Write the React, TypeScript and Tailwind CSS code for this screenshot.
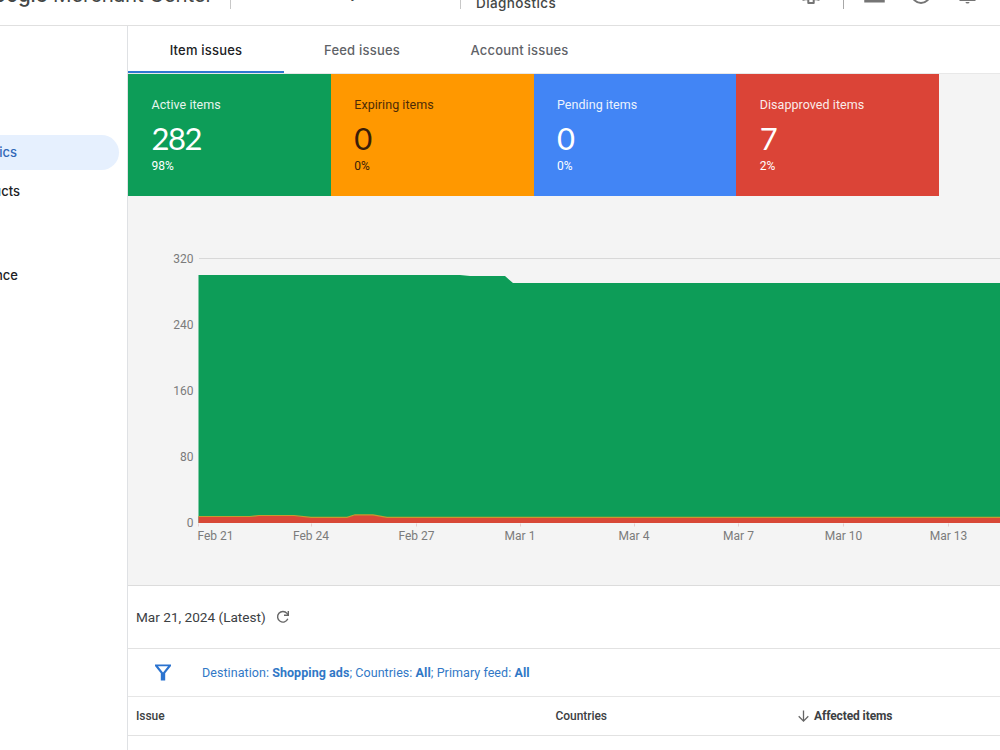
import React from 'react';

const tabs = [
  { label: 'Item issues', width: 'w-[156px]', active: true },
  { label: 'Feed issues', width: 'w-[156px]', active: false },
  { label: 'Account issues', width: 'w-[159px]', active: false },
];

const stats = [
  { label: 'Active items', value: '282', percent: '98%', style: 'bg-[#0d9d58] text-white' },
  { label: 'Expiring items', value: '0', percent: '0%', style: 'bg-[#ff9800] text-[#3a1d08]' },
  { label: 'Pending items', value: '0', percent: '0%', style: 'bg-[#4285f5] text-white' },
  { label: 'Disapproved items', value: '7', percent: '2%', style: 'bg-[#db4437] text-white' },
];

const yTicks = [
  { label: '320', y: 62 },
  { label: '240', y: 128 },
  { label: '160', y: 194 },
  { label: '80', y: 260 },
  { label: '0', y: 326 },
];

const xTicks = [
  { label: 'Feb 21', x: 87.5, tick: 70.5 },
  { label: 'Feb 24', x: 183, tick: 183.5 },
  { label: 'Feb 27', x: 288.5, tick: 288.5 },
  { label: 'Mar 1', x: 392, tick: 392.5 },
  { label: 'Mar 4', x: 506, tick: 506.5 },
  { label: 'Mar 7', x: 610.5, tick: 610.5 },
  { label: 'Mar 10', x: 715.5, tick: 715.5 },
  { label: 'Mar 13', x: 820.5, tick: 820.5 },
];

const Header: React.FC = () => {
  return (
    <header className="h-[26px] shrink-0 flex items-end overflow-hidden border-b border-[#e0e0e0] bg-white">
      <div className="h-16 w-full shrink-0 flex items-center text-[#444746]">
        <div className="w-[213px] flex justify-end whitespace-nowrap font-['Inter','Roboto',sans-serif] text-[20.5px] leading-7 pt-[4px] tracking-[-0.2px]">
          <span className="font-medium">Google</span>&nbsp;Merchant Center
        </div>
        <div className="w-px h-8 ml-[17px] mt-[-1px] bg-[#c8c8c8]" />
        <div className="w-[229px] pl-[26px] pb-px text-[14px] font-['Inter','Roboto',sans-serif]">Store Inventory</div>
        <div className="w-px h-8 mt-[-1px] bg-[#c8c8c8]" />
        <div className="w-[338px] pl-[15px] pt-px font-['Inter','Roboto',sans-serif] text-[13.5px] leading-[18px] tracking-[0.4px] font-medium">
          <div>Products</div>
          <div>Diagnostics</div>
        </div>
        {/* Toolbar icons */}
        <svg className="w-6 h-6 shrink-0" viewBox="0 0 24 24" fill="none" stroke="#757575" strokeWidth="2" strokeLinejoin="round">
          <circle cx="12" cy="12" r="3.500" />
          <path d="M10 2h4l.7 3 2 1.100 3-.9 2 3.500-2.300 2v2.600l2.300 2-2 3.500-3.200-.8-1.800 1V22h-5.400v-3l-1.800-1-3.200.8-2-3.500 2.300-2v-2.600l-2.300-2 2-3.500 3 .9 2-1.100z" />
        </svg>
        <div className="w-px h-8 ml-[20px] mt-[-1px] bg-[#a8a8a8]" />
        <svg className="w-6 h-6 ml-[18px] shrink-0" viewBox="0 0 24 24" fill="none" stroke="#757575" strokeWidth="2.500">
          <path d="M3.500 4h18v16.200H3.500z" />
        </svg>
        <svg className="w-6 h-6 ml-[23px] shrink-0" viewBox="0 0 24 24" fill="none" stroke="#757575" strokeWidth="2">
          <circle cx="12" cy="13" r="9" />
        </svg>
        <svg className="w-6 h-6 ml-[23px] shrink-0" viewBox="0 0 24 24" fill="#757575">
          <path d="M19.500 18v2h-16v-2l2-2v-5c0-3 1.600-5.600 4.500-6.300V4a1.500 1.500 0 0 1 3 0v.7c2.900.7 4.500 3.300 4.500 6.300v5z" />
          <path d="M9.500 21h4a2 1.500 0 0 1-4 0z" />
        </svg>
      </div>
    </header>
  );
};

const Sidebar: React.FC = () => {
  return (
    <aside className="w-[127px] shrink-0 pt-[109px] overflow-hidden font-['Inter','Roboto',sans-serif] text-[13px] font-medium text-[#202124]">
      <div className="w-[119px] h-[35px] flex items-center justify-end pr-[102px] rounded-r-full bg-[#e6f0fe] text-[#3168b8]">
        Diagnostics
      </div>
      <div className="w-[20px] h-[44px] flex items-center justify-end whitespace-nowrap">All products</div>
      <div className="w-[18px] h-[42px] mt-[41px] flex items-center justify-end">Performance</div>
    </aside>
  );
};

const Chart: React.FC = () => {
  return (
    <svg className="block w-[872px] h-[389px]" viewBox="0 0 872 389">
      <path d="M71 62.500H872" stroke="#d8d8d8" />
      <path d="M70.500 79H332L342 80H377L385 87H872V327H70.500z" fill="#0d9d58" />
      <path
        d="M70.500 320.800H122L131 319.800H166L183 321.500H219L227 319H245L259 321.500H872V327H70.500z"
        fill="#d84837"
      />
      <path
        d="M70.500 320.500H122L131 319.500H166L183 321.300H219L227 318.800H245L259 321.300H872"
        fill="none"
        stroke="#c9982e"
        strokeWidth="1.200"
      />
      <g fontFamily="Roboto, sans-serif" fontSize="12" fill="#7b7b7b">
        {yTicks.map((t) => (
          <text key={t.label} x="65.500" y={t.y + 4.500} textAnchor="end">
            {t.label}
          </text>
        ))}
        {xTicks.map((t) => (
          <g key={t.label}>
            <path d={`M${t.tick} 327.500v3`} stroke="#e5cfcf" />
            <text x={t.x} y="344" textAnchor="middle">
              {t.label}
            </text>
          </g>
        ))}
      </g>
    </svg>
  );
};

const App: React.FC = () => {
  return (
    <div className="w-[1000px] h-[750px] flex flex-col overflow-hidden bg-white font-['Roboto',sans-serif] text-[#3c4043]">
      <Header />
      <div className="flex flex-1 min-h-0">
        <Sidebar />
        <main className="flex-1 min-w-0 overflow-hidden border-l border-[#dfe1e4]">
          {/* Tabs */}
          <div className="h-[47px] flex font-['Inter','Roboto',sans-serif] text-[13px] tracking-[0.2px] font-medium">
            {tabs.map((tab) => (
              <div
                key={tab.label}
                className={`${tab.width} flex items-center justify-center pt-[4px] border-b-2 ${
                  tab.active ? 'border-[#2f78d0] text-[#202124]' : 'border-transparent text-[#5f6368]'
                }`}
              >
                {tab.label}
              </div>
            ))}
          </div>

          {/* Summary and history */}
          <section className="h-[513px] border-t border-b border-t-[#e8e8e8] border-b-[#dcdcdc] bg-[#f4f4f4]">
            <div className="flex w-[811px] h-[122px]">
              {stats.map((s) => (
                <div key={s.label} className={`flex-1 pl-[23.5px] pt-[22px] ${s.style}`}>
                  <div className="text-[12.5px] leading-[18px] tracking-[0.05px] opacity-90">{s.label}</div>
                  <div className="mt-[4px] h-[41px] font-['Lato','Roboto',sans-serif] text-[31px] leading-[40px] tracking-[-1.5px]">
                    {s.value}
                  </div>
                  <div className="text-[12px] leading-[14px]">{s.percent}</div>
                </div>
              ))}
            </div>
            <Chart />
          </section>

          <div className="h-[63px] pl-[8px] flex items-center border-b border-[#e2e2e2] text-[13.6px]">
            <span>Mar 21, 2024 (Latest)</span>
            <svg className="ml-[10px] w-[14px] h-[14px]" viewBox="0 0 14 14" fill="none" stroke="#666" strokeWidth="1.400">
              <path d="M11.800 8.800A5.300 5.300 0 1 1 11 3.400L12.500 5" />
              <path d="M12.300 1v4.300H8" />
            </svg>
          </div>

          <div className="h-[48px] flex items-center border-b border-[#e6e6e6] text-[12.5px] tracking-[0.06px] text-[#3178c6]">
            <svg className="ml-[27px] w-[16px] h-[17px]" viewBox="0 0 16 17">
              <path
                d="M0 .5H16V2L10.200 9.300V16.500H5.800V9.300L0 2zM3 2.300 8 8.600 13 2.300z"
                fill="#2b73cf"
                fillRule="evenodd"
              />
            </svg>
            <span className="ml-[31px] pt-px whitespace-pre">
              Destination: <b>Shopping ads</b>; Countries: <b>All</b>; Primary feed: <b>All</b>
            </span>
          </div>

          <div className="h-[39px] pl-[8px] flex items-center border-b border-[#e2e2e2] text-[12px] tracking-[-0.05px] font-medium">
            <div className="w-[419.5px]">Issue</div>
            <div className="w-[242.5px]">Countries</div>
            <svg className="w-[11px] h-[12px]" viewBox="0 0 11 12" fill="none" stroke="#666" strokeWidth="1.300">
              <path d="M5.500 .5v10.500M.7 6.300l4.800 4.800 4.800-4.800" />
            </svg>
            <div className="ml-[5px] font-bold tracking-[-0.1px]">Affected items</div>
          </div>
        </main>
      </div>
    </div>
  );
};

export default App;
